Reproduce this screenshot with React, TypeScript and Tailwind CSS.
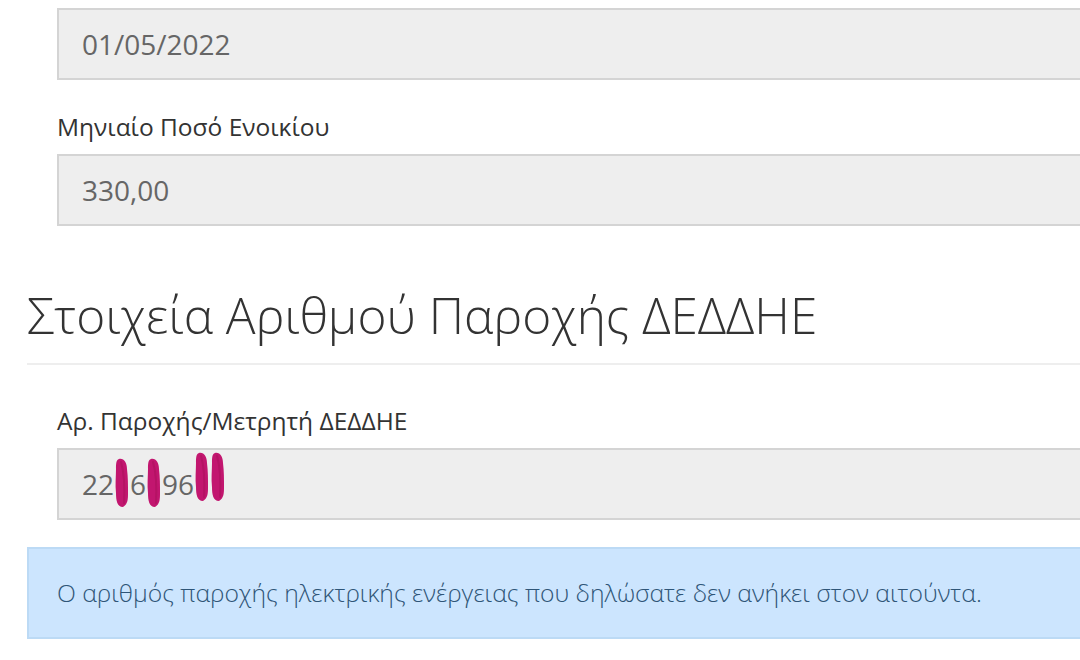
import React from 'react';

const font = { fontFamily: '"Open Sans", "Noto Sans", sans-serif' };

// magenta marker stroke hiding one digit
const Scribble: React.FC<{ tall?: boolean }> = ({ tall }) => (
    <span className="inline-block w-[16px] h-[28px] align-middle relative">
        <svg
            className={`absolute left-[-1px] ${tall ? 'top-[-18px]' : 'top-[-12px]'} overflow-visible`}
            width="18"
            height="50"
            viewBox="0 0 18 50"
        >
            <path
                d="M6 1 C11 0 14 5 14 11 C15 19 15 27 15 35 C15 41 15 46 10 49 C4 49 3 42 3 35 C2 27 3 18 3 11 C3 6 3 2 6 1 Z"
                fill="#c2166f"
            />
            <path d="M8 4 C11 14 12 26 11 45" stroke="#a8105a" strokeWidth="2" fill="none" strokeLinecap="round" opacity="0.5" />
        </svg>
    </span>
);

const Field: React.FC<{ children: React.ReactNode }> = ({ children }) => (
    <div className="h-[72px] bg-[#eeeeee] border-2 border-[#d4d4d4] border-r-0 flex items-center pl-[23px] text-[28px] text-[#666666]">
        {children}
    </div>
);

const Label: React.FC<{ children: React.ReactNode }> = ({ children }) => (
    <div className="text-[24.5px] text-[#333333] leading-none mb-[14px]">{children}</div>
);

export default function App() {
    return (
        <div className="w-[1080px] h-[660px] overflow-hidden bg-white" style={font}>
            <div className="w-[1120px] pl-[27px] pt-[8px]">
                <div className="pl-[30px]">
                    <Field>01/05/2022</Field>
                    <div className="mt-[35px]">
                        <Label>Μηνιαίο Ποσό Ενοικίου</Label>
                        <Field>330,00</Field>
                    </div>
                </div>

                <h2 className="mt-[65px] text-[49.5px] font-light text-[#333333] leading-none pb-[23px] border-b-2 border-[#eeeeee]">
                    Στοιχεία Αριθμού Παροχής ΔΕΔΔΗΕ
                </h2>

                <div className="pl-[30px] mt-[44px]">
                    <Label>Αρ. Παροχής/Μετρητή ΔΕΔΔΗΕ</Label>
                    <Field>
                        <span className="inline-flex items-center">
                            22
                            <Scribble />
                            6
                            <Scribble />
                            96
                            <Scribble tall />
                            <Scribble tall />
                        </span>
                    </Field>
                </div>

                <div className="mt-[27px] h-[92px] bg-[#cce5fe] border-2 border-[#bcdaf5] border-r-0 flex items-center pl-[28px] text-[24.7px] font-light text-[#2f5577]">
                    Ο αριθμός παροχής ηλεκτρικής ενέργειας που δηλώσατε δεν ανήκει στον αιτούντα.
                </div>
            </div>
        </div>
    );
}
